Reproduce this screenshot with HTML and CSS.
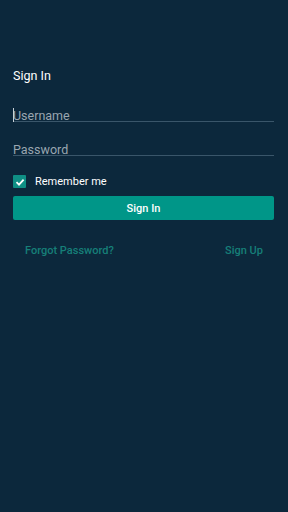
FILE: index.html
```html
<!DOCTYPE html>
<html>
<head>
<meta charset="utf-8">
<link rel="stylesheet" href="styles.css">
</head>
<body>
<div class="screen">
  <h1 class="title">Sign In</h1>
  <div class="field first"><span class="caret"></span><span class="ph">Username</span></div>
  <div class="field"><span class="ph">Password</span></div>
  <label class="remember">
    <span class="check"><svg viewBox="0 0 12 12" width="12" height="12"><path d="M2.5 6.2 L5 8.6 L9.6 3.6" fill="none" stroke="#fff" stroke-width="1.8"/></svg></span>
    <span>Remember me</span>
  </label>
  <div class="btn">Sign In</div>
  <div class="links">
    <span class="link">Forgot Password?</span>
    <span class="link">Sign Up</span>
  </div>
</div>
</body>
</html>
```
FILE: styles.css
```css
html, body { margin: 0; padding: 0; }
body { background: #0c283c; width: 288px; height: 512px; font-family: Roboto, "Noto Sans", sans-serif; }
.screen { padding: 68px 14px 0 13px; display: flex; flex-direction: column; }
.title { margin: 0; font-size: 12.5px; font-weight: 400; color: #ffffff; line-height: 16px; }
.field { margin-top: 13px; height: 20px; border-bottom: 1px solid #3a566a; display: flex; align-items: flex-end; position: relative; }
.field.first { margin-top: 17px; }
.ph { font-size: 12.5px; line-height: 11px; color: #9aa6b0; }
.caret { position: absolute; left: 0; top: 7px; width: 1px; height: 14px; background: #c8d0d6; }
.remember { margin-top: 19px; height: 13px; display: flex; align-items: center; gap: 9px; font-size: 11px; color: #ffffff; }
.check { width: 13px; height: 13px; background: #0f8f85; border-radius: 1px; display: flex; align-items: center; justify-content: center; }
.btn { margin-top: 8px; height: 24px; background: #009688; border-radius: 2px; color: #fff; font-size: 11px; font-weight: 500; display: flex; align-items: center; justify-content: center; }
.links { margin-top: 24px; line-height: 14px; display: flex; justify-content: space-between; padding: 0 11px 0 12px; }
.link { font-size: 11px; font-weight: 500; color: #167f78; }
```
